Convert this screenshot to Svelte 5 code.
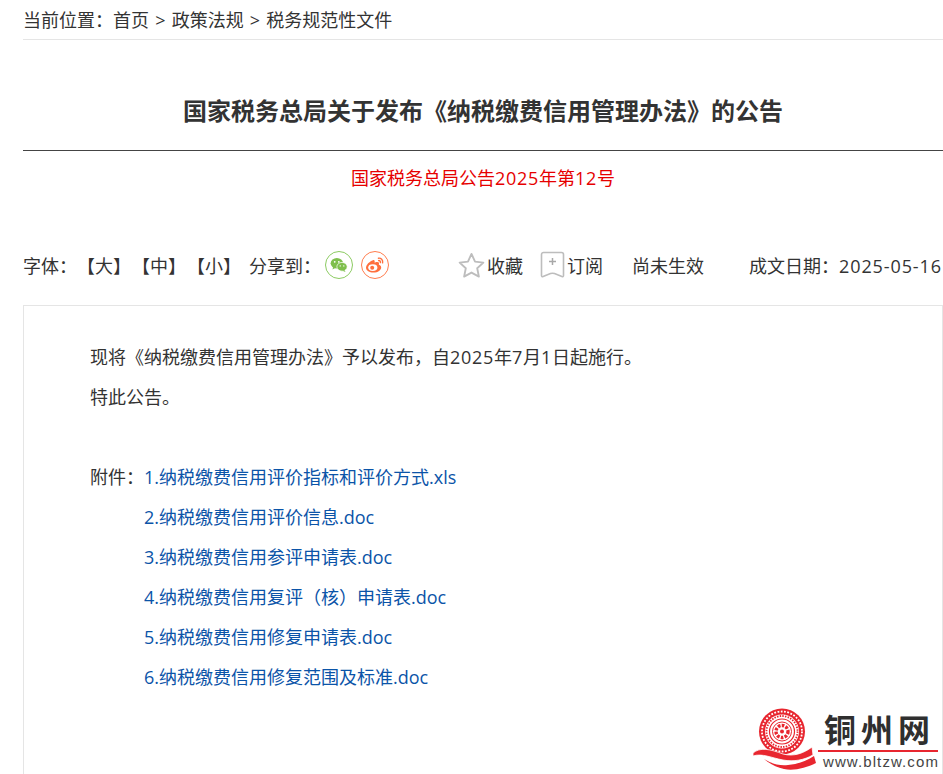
<script lang="ts">
  const attachments = [
    "1.纳税缴费信用评价指标和评价方式.xls",
    "2.纳税缴费信用评价信息.doc",
    "3.纳税缴费信用参评申请表.doc",
    "4.纳税缴费信用复评（核）申请表.doc",
    "5.纳税缴费信用修复申请表.doc",
    "6.纳税缴费信用修复范围及标准.doc"
  ];
</script>

<div class="page">
  <div class="crumb">当前位置：<a>首页</a> &gt; <a>政策法规</a> &gt; <a>税务规范性文件</a></div>

  <h1 class="title">国家税务总局关于发布《纳税缴费信用管理办法》的公告</h1>
  <p class="docno">国家税务总局公告<span class="n">2025</span>年第<span class="n">12</span>号</p>

  <div class="tools">
    <span class="label">字体：</span>
    <span class="sizes">
      <a>【大】</a>
      <a>【中】</a>
      <a>【小】</a>
    </span>
    <span class="share">分享到：</span>
    <span class="round wx">
      <svg width="18" height="16" viewBox="0 0 20 18">
        <ellipse cx="7.6" cy="7" rx="7" ry="6" fill="#7fbf4d" />
        <path d="M3.5 11l-.8 3 3.4-1.800z" fill="#7fbf4d" />
        <ellipse cx="13.400" cy="11" rx="5.800" ry="4.900" fill="#7fbf4d" stroke="#fff" stroke-width=".8" />
        <path d="M16 14.600l1.400 2.400-3.600-1.600z" fill="#7fbf4d" />
        <circle cx="5.200" cy="5.400" r="1" fill="#fff" />
        <circle cx="9.800" cy="5.400" r="1" fill="#fff" />
        <circle cx="11.400" cy="10" r=".8" fill="#fff" />
        <circle cx="15.400" cy="10" r=".8" fill="#fff" />
      </svg>
    </span>
    <span class="round wb">
      <svg width="20" height="18" viewBox="0 0 20 18">
        <path d="M8 4.200C4.400 5.400 1 8.800 1 11.800 1 14.800 4.600 16.600 8.400 16.600c4.600 0 7.800-2.800 7.800-5.200 0-1.800-1.600-2.400-2.400-2.600.6-1.400.4-2.800-1.600-2.800-1 0-2.200.5-2.600.7.3-1.200.2-3-1.600-2.500z" fill="#ff6f3d" />
        <ellipse cx="7.800" cy="11.600" rx="4.600" ry="3.400" fill="#fff" />
        <circle cx="7.200" cy="11.800" r="2" fill="#ff6f3d" />
        <path d="M13.400 2.200c2.600-.4 4.800 1.800 4.200 4.600M13.600 4.600c1.200-.2 2 .8 1.800 2" fill="none" stroke="#ff6f3d" stroke-width="1.400" stroke-linecap="round" />
      </svg>
    </span>

    <span class="action fav">
      <svg width="27" height="27" viewBox="0 0 26 26">
        <path d="M13 1.800l3.400 7.400 8 1-5.900 5.500 1.600 8L13 19.800l-7.100 3.900 1.600-8L1.600 10.200l8-1z" fill="none" stroke="#bdbdbd" stroke-width="1.800" stroke-linejoin="round" />
      </svg>
      收藏
    </span>
    <span class="action sub">
      <svg width="25" height="28" viewBox="0 0 25 28">
        <path d="M3.500 1.500h18a2 2 0 0 1 2 2v21c0 1-.8 1.400-1.600 1.100l-7.400-3a6 6 0 0 0-4 0l-7.400 3c-.8.300-1.600-.1-1.600-1.100v-21a2 2 0 0 1 2-2z" fill="none" stroke="#bdbdbd" stroke-width="1.600" />
        <path d="M12.500 7v7M9 10.500h7" stroke="#a8a8a8" stroke-width="1.500" />
      </svg>
      订阅
    </span>
    <span class="status">尚未生效</span>
    <span class="date">成文日期：<span class="num">2025-05-16</span></span>
  </div>

  <div class="content">
    <p>现将《纳税缴费信用管理办法》予以发布，自<span class="n">2025</span>年<span class="n">7</span>月<span class="n">1</span>日起施行。</p>
    <p>特此公告。</p>
    <p class="blank"></p>
    <div class="files">
      <span class="files-label">附件：</span>
      <ul>
        {#each attachments as file}
          <li><a>{file}</a></li>
        {/each}
      </ul>
    </div>
    <p class="blank"></p>
  </div>

  <div class="stamp">
    <svg width="70" height="68" viewBox="0 0 70 68">
      <circle cx="32" cy="25.500" r="23" fill="#e8262f" />
      <circle cx="32" cy="25.500" r="20" fill="none" stroke="#fff" stroke-width="1.800" stroke-dasharray="1.800 1.500" />
      <circle cx="32" cy="25.500" r="17" fill="#fff" />
      <circle cx="32" cy="25.500" r="15.500" fill="none" stroke="#e8262f" stroke-width="1.800" stroke-dasharray="1.500 1.200" />
      <circle cx="32" cy="25.500" r="12.500" fill="none" stroke="#e8262f" stroke-width="1.200" />
      <circle cx="32" cy="25.500" r="9.500" fill="none" stroke="#e8262f" stroke-width="1" />
      <circle cx="32" cy="25.500" r="6" fill="none" stroke="#e8262f" stroke-width="3.400" stroke-dasharray="2.600 1.300" />
      <circle cx="32" cy="25.500" r="2" fill="#e8262f" />
      <path d="M3 47C10 41 20 43 33 48 44 51 54 47 62 41L63 49C54 54 44 56 33 54 22 52 12 47 3 50z" fill="#e8262f" stroke="#fff" stroke-width=".8" />
      <path d="M14 53C22 58 30 60 38 59 48 58 56 55 64 50L66 57C56 62 44 65 34 63 26 61 20 58 14 53z" fill="#e8262f" />
    </svg>
    <div class="stamp-text">
      <div class="stamp-name">铜州网</div>
      <div class="stamp-url">www.bltzw.com</div>
    </div>
  </div>
</div>

<style>
  :global(body) {
    margin: 0;
    background: #fff;
  }

  .page {
    position: relative;
    height: 774px;
    overflow: hidden;
    padding-left: 23px;
    box-sizing: border-box;
    font-family: "Open Sans", "Noto Sans CJK SC", sans-serif;
    font-size: 18px;
    color: #333;
    text-spacing-trim: space-all;
  }

  .crumb {
    height: 39px;
    line-height: 40px;
    border-bottom: 1px solid #e5e5e5;
    word-spacing: 1.500px;
  }

  .title {
    margin: 0;
    height: 110px;
    line-height: 142px;
    font-size: 24px;
    font-weight: 700;
    text-align: center;
    border-bottom: 1px solid #444;
  }

  .docno {
    margin: 0;
    height: 54px;
    line-height: 54px;
    text-align: center;
    color: #e60000;
  }

  .n { letter-spacing: 0.7px; }

  .tools {
    display: flex;
    align-items: center;
    box-sizing: border-box;
    height: 100px;
    padding-top: 20px;
    white-space: nowrap;
  }

  .label { width: 54px; }
  .sizes {
    width: 172px;
    display: flex;
    gap: 1px;
  }
  .share { width: 76px; }

  .round {
    width: 26px;
    height: 26px;
    border-radius: 50%;
    border: 1px solid;
    display: flex;
    align-items: center;
    justify-content: center;
    margin-right: 8px;
  }
  .wx { border-color: #8ccb62; }
  .wb { border-color: #ff7c4d; }

  .action {
    display: flex;
    align-items: center;
    gap: 2px;
  }
  .fav { margin-left: 61px; width: 82px; }
  .sub { width: 92px; }
  .status { width: 117px; }
  .num { letter-spacing: 0.9px; }

  .content {
    border: 1px solid #e5e5e5;
    padding: 31px 0 0 66px;
    line-height: 40px;
    height: 600px;
  }
  .content p { margin: 0; }
  .blank { height: 40px; }

  .files { display: flex; }
  .files-label { width: 54px; }
  .files ul {
    list-style: none;
    margin: 0;
    padding: 0;
  }
  .files a { color: #0b54a8; }

  .stamp {
    position: absolute;
    left: 750px;
    top: 706px;
    width: 192px;
    height: 68px;
    display: flex;
  }
  .stamp svg { margin-right: -2px; flex: none; }
  .stamp-text { width: 120px; }
  .stamp-name {
    font-family: "Noto Sans CJK SC", sans-serif;
    font-size: 32px;
    font-weight: 700;
    letter-spacing: 5px;
    line-height: 44px;
    color: #2f2f2f;
    padding-left: 6px;
    border-bottom: 2px solid #e8262f;
  }
  .stamp-url {
    font-family: "Liberation Sans", sans-serif;
    font-size: 15px;
    letter-spacing: 1.100px;
    line-height: 20px;
    padding-left: 5px;
    color: #444;
    white-space: nowrap;
  }
</style>
